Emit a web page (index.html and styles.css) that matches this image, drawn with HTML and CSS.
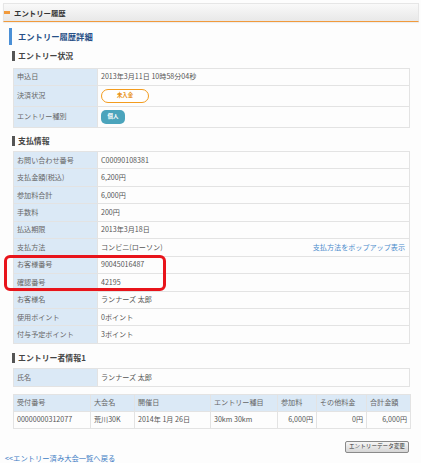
FILE: index.html
```html
<!DOCTYPE html>
<html lang="ja">
<head>
<meta charset="utf-8">
<title>エントリー履歴</title>
<link rel="stylesheet" href="styles.css">
</head>
<body>
<div class="panel-head"><span class="marker"></span>エントリー履歴</div>

<h2 class="title">エントリー履歴詳細</h2>

<h3 class="sec">エントリー状況</h3>
<table class="kv t1">
  <tr><th>申込日</th><td>2013年3月11日 10時58分04秒</td></tr>
  <tr class="tall"><th>決済状況</th><td><span class="badge-unpaid">未入金</span></td></tr>
  <tr class="tall"><th>エントリー種別</th><td><span class="badge-personal">個人</span></td></tr>
</table>

<h3 class="sec sec2">支払情報</h3>
<div class="pay-wrap">
<table class="kv t2">
  <tr><th>お問い合わせ番号</th><td>C00090108381</td></tr>
  <tr><th>支払金額(税込)</th><td>6,200円</td></tr>
  <tr><th>参加料合計</th><td>6,000円</td></tr>
  <tr><th>手数料</th><td>200円</td></tr>
  <tr><th>払込期限</th><td>2013年3月18日</td></tr>
  <tr><th>支払方法</th><td><div class="split"><span>コンビニ(ローソン)</span><a class="link" href="#">支払方法をポップアップ表示</a></div></td></tr>
  <tr><th>お客様番号</th><td>90045016487</td></tr>
  <tr><th>確認番号</th><td>42195</td></tr>
  <tr><th>お客様名</th><td>ランナーズ 太郎</td></tr>
  <tr><th>使用ポイント</th><td>0ポイント</td></tr>
  <tr><th>付与予定ポイント</th><td>3ポイント</td></tr>
</table>
<div class="highlight"></div>
</div>

<h3 class="sec sec3">エントリー者情報1</h3>
<table class="kv t3">
  <tr><th>氏名</th><td>ランナーズ 太郎</td></tr>
</table>

<table class="grid t4">
  <colgroup>
    <col style="width:77px"><col style="width:44px"><col style="width:76px"><col style="width:67px"><col style="width:39px"><col style="width:50px"><col style="width:44px">
  </colgroup>
  <tr><th>受付番号</th><th>大会名</th><th>開催日</th><th>エントリー種目</th><th>参加料</th><th>その他料金</th><th>合計金額</th></tr>
  <tr><td>00000000312077</td><td>荒川30K</td><td>2014年 1月 26日</td><td>30km 30km</td><td class="num">6,000円</td><td class="num">0円</td><td class="num">6,000円</td></tr>
</table>

<div class="actions"><button class="btn" type="button">エントリーデータ変更</button></div>

<a class="back" href="#">&lt;&lt;エントリー済み大会一覧へ戻る</a>
</body>
</html>
```

FILE: styles.css
```css
html, body {
  margin: 0;
  padding: 0;
  background: #fdfdfd;
}
body {
  width: 421px;
  font-family: "Noto Sans CJK JP", "Noto Sans", sans-serif;
  color: #555;
}

.panel-head {
  margin: 3px 2px 0 3px;
  height: 17px;
  border: 1px solid #e6e6e6;
  border-bottom: 1px solid #f19a3c;
  background: linear-gradient(#f9f9f9, #e8e8e8);
  box-shadow: 0 1px 1px rgba(0, 0, 0, 0.06);
  display: flex;
  align-items: center;
  font-size: 7.4px;
  font-weight: bold;
  color: #333;
  line-height: 1;
}
.marker {
  width: 6px;
  height: 3px;
  background: #f19a3c;
  margin: 0 4px 0 0;
}

.title {
  margin: 6px 0 0 9px;
  height: 17px;
  border-left: 3px solid #4a8fd6;
  padding-left: 6px;
  font-size: 8.3px;
  line-height: 17px;
  font-weight: bold;
  color: #264f86;
}

.sec {
  margin: 6px 0 0 12px;
  height: 10px;
  border-left: 3px solid #555;
  padding-left: 3px;
  font-size: 7.9px;
  line-height: 10px;
  font-weight: bold;
  color: #444;
}
.sec2 { margin-top: 8px; }
.sec3 { margin-top: 9px; }

table {
  border-collapse: collapse;
  margin-left: 13px;
  width: 397px;
  font-size: 7.1px;
  line-height: 1;
}
th, td {
  border: 1px solid #e3e3e3;
  padding: 0 3px;
  text-align: left;
  font-weight: normal;
  vertical-align: middle;
}
.kv th {
  width: 77px;
  background: #dbe9f6;
  color: #666;
}
.kv td {
  background: #fdfdfd;
  color: #555;
}

.t1 { margin-top: 7px; }
.t1 tr { height: 17px; }
.t1 tr.tall { height: 21px; }

.pay-wrap {
  position: relative;
  margin-top: 5px;
}
.t2 tr { height: 17.45px; }

.split {
  display: flex;
  justify-content: space-between;
  align-items: center;
}
.link {
  color: #4a8bcc;
  text-decoration: none;
  margin-right: 1px;
}

.highlight {
  position: absolute;
  left: 4px;
  top: 104px;
  width: 156px;
  height: 30px;
  border: 3.5px solid #e8141b;
  border-radius: 6px;
}

.badge-unpaid {
  display: flex;
  align-items: center;
  justify-content: center;
  width: 46px;
  height: 12px;
  border: 1px solid #f39c1e;
  border-radius: 7px;
  background: #fff;
  color: #e8900f;
  font-size: 5.4px;
  font-weight: bold;
}
.badge-personal {
  display: flex;
  align-items: center;
  justify-content: center;
  width: 24px;
  height: 14px;
  border-radius: 5px;
  background: #4ba4bc;
  color: #fff;
  font-size: 5.4px;
  font-weight: bold;
}

.t3 { margin-top: 5px; }
.t3 tr { height: 18px; }

.t4 {
  margin-top: 7px;
  table-layout: fixed;
}
.t4 tr { height: 17px; }
.t4 th {
  background: #dbe9f6;
  color: #666;
}
.t4 td {
  color: #555;
  white-space: nowrap;
}
.t4 td.num {
  text-align: right;
  padding-right: 3px;
}

.actions {
  display: flex;
  justify-content: flex-end;
  margin: 12px 12px 0 0;
}
.btn {
  height: 12px;
  width: 64px;
  padding: 0;
  border: 1px solid #8a8a8a;
  border-radius: 2px;
  background: linear-gradient(#f6f6f6, #d6d6d6);
  font-family: "Noto Sans CJK JP", sans-serif;
  font-size: 5.6px;
  line-height: 1;
  color: #333;
}

.back {
  display: block;
  margin: 0 0 0 5px;
  font-size: 7.3px;
  line-height: 10px;
  color: #3c7cc4;
  text-decoration: none;
}
```
